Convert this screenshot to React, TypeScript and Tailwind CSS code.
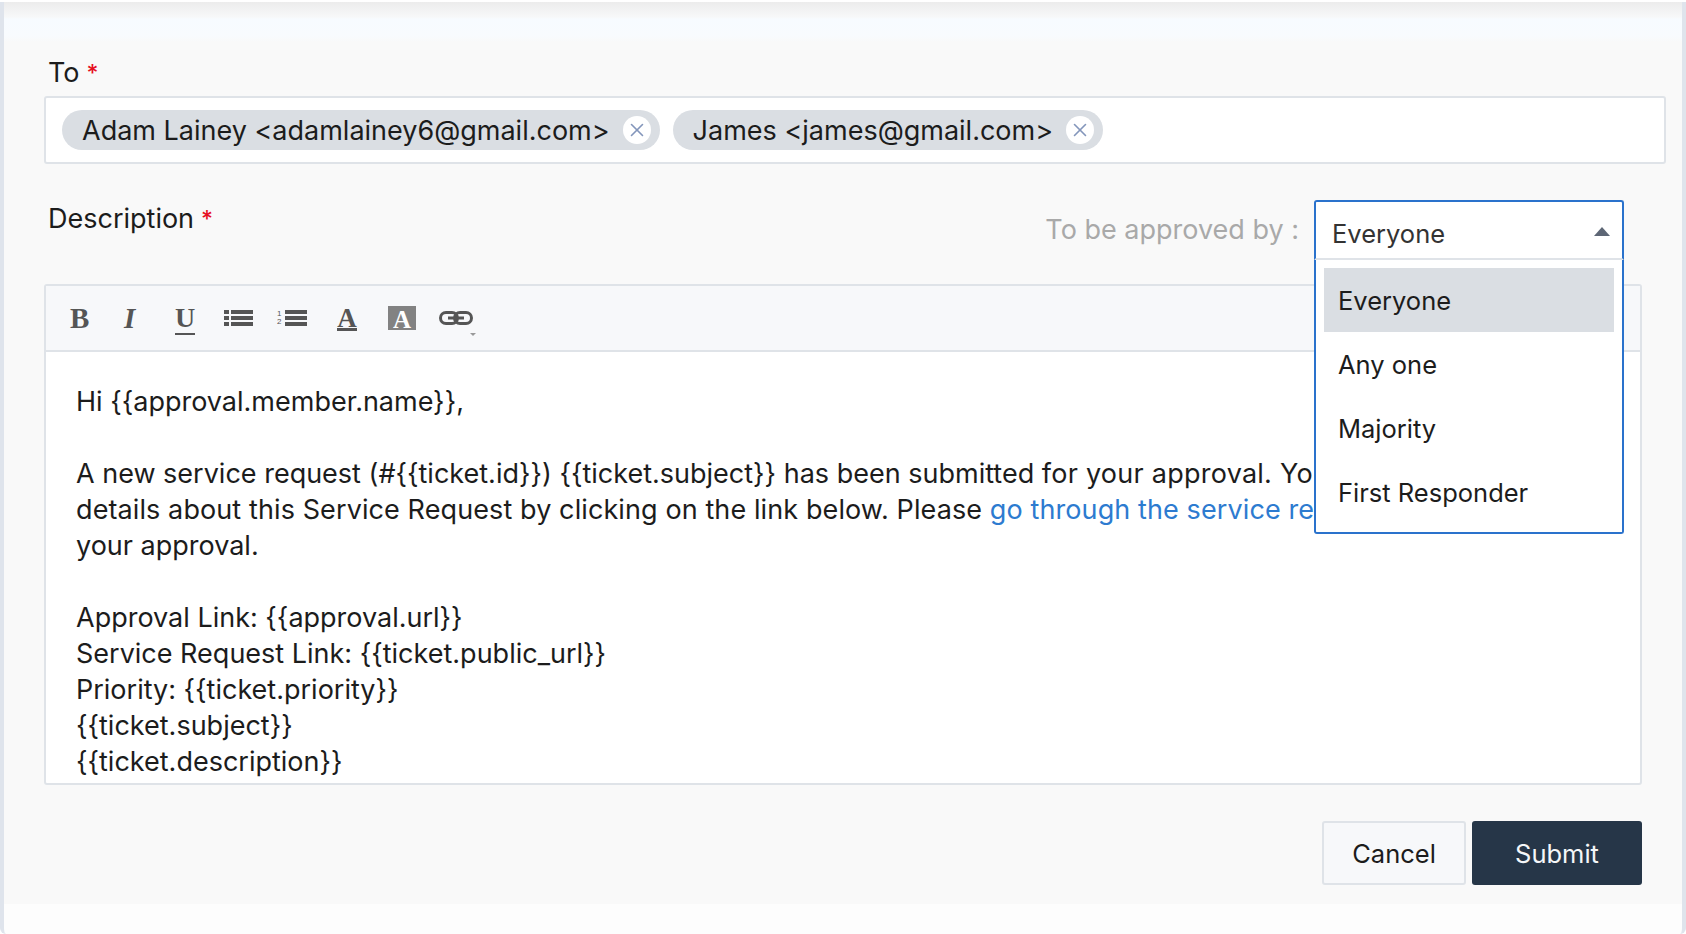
import { X } from "lucide-react";

const chips = ["Adam Lainey <adamlainey6@gmail.com>", "James <james@gmail.com>"];
const options = ["Everyone", "Any one", "Majority", "First Responder"];

function Required() {
  return <span className="ml-[7px] text-[23px] leading-none font-medium text-[#e60f1f]">*</span>;
}

function ListIcon({ numbered }: { numbered?: boolean }) {
  if (numbered) {
    return (
      <span className="flex h-[16px] w-[30px] items-center">
        <span className="flex w-[8px] flex-col text-[8px] leading-[8px] text-[#555] [font-family:'Liberation_Sans',sans-serif]">
          <span>1</span>
          <span>2</span>
        </span>
        <svg width="22" height="16" viewBox="0 0 22 16" className="fill-[#555]">
          <rect y="0" width="22" height="4" />
          <rect y="6" width="22" height="4" />
          <rect y="12" width="22" height="4" />
        </svg>
      </span>
    );
  }
  return (
    <svg width="29" height="16" viewBox="0 0 29 16" className="fill-[#555]">
      <rect y="0" width="5" height="4" />
      <rect y="6" width="5" height="4" />
      <rect y="12" width="5" height="4" />
      <rect x="7" y="0" width="22" height="4" />
      <rect x="7" y="6" width="22" height="4" />
      <rect x="7" y="12" width="22" height="4" />
    </svg>
  );
}

function Toolbar() {
  return (
    <div className="flex h-[66px] shrink-0 items-center border-b-2 border-[#dfe3e8] bg-[#f7f8fa] pl-[24px] text-[#555]">
      <span className="w-[54px] text-[29px] leading-none font-bold [font-family:'Liberation_Serif',serif]">B</span>
      <span className="w-[51px] text-[29px] leading-none font-bold italic [font-family:'Liberation_Serif',serif]">I</span>
      <span className="w-[49px] text-[28px] leading-none font-bold [font-family:'Liberation_Serif',serif]">
        <span className="border-b-2 border-[#555]">U</span>
      </span>
      <span className="w-[53px]">
        <ListIcon />
      </span>
      <span className="w-[60px]">
        <ListIcon numbered />
      </span>
      <span className="w-[51px] text-[27px] leading-none font-bold [font-family:'Liberation_Serif',serif]">
        <span className="inline-block h-[24px] w-[20px] border-b-[3px] border-[#555] text-center leading-[22px]">A</span>
      </span>
      <span className="mr-[23px] flex h-[24px] w-[28px] items-center justify-center bg-[#828282] pt-[3px] text-[25px] leading-none font-bold text-white [font-family:'Liberation_Serif',serif]">
        A
      </span>
      <span className="relative">
        <svg width="34" height="14" viewBox="0 0 34 14" fill="none" className="stroke-[#555]">
          <rect x="1.5" y="1.5" width="17" height="11" rx="5.5" strokeWidth="3" />
          <rect x="15.5" y="1.5" width="17" height="11" rx="5.5" strokeWidth="3" />
          <path d="M9 7h16" strokeWidth="3" />
        </svg>
        <span className="absolute top-[22px] left-[31px] h-0 w-0 border-x-[3px] border-t-[3px] border-x-transparent border-t-[#999]" />
      </span>
    </div>
  );
}

export default function App() {
  return (
    <div className="h-[934px] w-[1686px] overflow-hidden pt-[2px] text-[27px] text-[#1c1c1c] [font-family:Inter,sans-serif]">
      <div className="flex h-[932px] flex-col rounded-b-[6px] border-x-4 border-[#dfe4ec] bg-[#fdfdfd]">
        <div className="h-[902px] bg-[#f9f9f9] bg-[linear-gradient(#ececec,#f7f8f9_15px,#f7fbff_17px,#f8fbfe_34px,#f9f9f9_40px)] bg-[length:100%_40px] bg-no-repeat pt-[54px] pr-[16px] pl-[40px]">
          <div className="flex h-[34px] items-center pl-[4px]">
            To
            <Required />
          </div>

          <div className="mt-[6px] flex h-[68px] items-center gap-[13px] rounded-[3px] border-2 border-[#dfe3e8] bg-white pl-[16px]">
            {chips.map((chip) => (
              <span key={chip} className="flex h-[40px] items-center rounded-full bg-[#dadee3] pr-[9px] pl-[20px] whitespace-nowrap">
                <span className="pt-[2px]">{chip}</span>
                <span className="ml-[13px] flex h-[28px] w-[28px] items-center justify-center rounded-full bg-white">
                  <X size={22} strokeWidth={1.75} className="text-[#8396bb]" />
                </span>
              </span>
            ))}
          </div>

          <div className="relative z-10 mt-[36px] mr-[25px] flex h-[59px] justify-between pr-[17px]">
            <div className="flex h-[38px] items-center pl-[4px]">
              Description
              <Required />
            </div>
            <div className="flex">
              <span className="mt-[10px] mr-[15px] text-[#a9a9a9]">To be approved by :</span>
              <div className="relative h-[60px] w-[310px] text-[25.5px]">
                <div className="flex h-[60px] items-center justify-between rounded-t-[3px] border-2 border-[#2a72cc] border-b-[#dfe3e8] bg-white pt-[8px] pr-[12px] pl-[16px] text-[#333]">
                  Everyone
                  <span className="mb-[6px] h-0 w-0 border-x-[8px] border-b-[9px] border-x-transparent border-b-[#5d6675]" />
                </div>
                <div className="absolute top-full right-0 left-0 rounded-b-[3px] border-x-2 border-b-2 border-[#2a72cc] bg-white px-[8px] pt-[8px] pb-[8px]">
                  {options.map((option, i) => (
                    <div key={option} className={i === 0 ? "flex h-[64px] items-center bg-[#dadee3] px-[14px] pt-[2px]" : "flex h-[64px] items-center px-[14px] pt-[2px]"}>
                      {option}
                    </div>
                  ))}
                </div>
              </div>
            </div>
          </div>

          <div className="mt-[25px] mr-[24px] flex h-[501px] flex-col overflow-hidden rounded-[3px] border-2 border-[#dfe3e8] bg-white">
            <Toolbar />
            <div className="overflow-hidden px-[30px] pt-[32px] leading-[36px] whitespace-nowrap">
              <p>Hi {"{{approval.member.name}}"},</p>
              <p>&nbsp;</p>
              <p>
                A new service request (#{"{{ticket.id}}"}) {"{{ticket.subject}}"} has been submitted{" "}
                <span className="tracking-[0.25px]">for your approval. Yo</span>
              </p>
              <p className="tracking-[0.1px]">
                details about this Service Request by clicking on the link below. Please{" "}
                <span className="text-[#2d7bd0]">go through the service re</span>
              </p>
              <p>your approval.</p>
              <p>&nbsp;</p>
              <p>Approval Link: {"{{approval.url}}"}</p>
              <p>Service Request Link: {"{{ticket.public_url}}"}</p>
              <p>Priority: {"{{ticket.priority}}"}</p>
              <p>{"{{ticket.subject}}"}</p>
              <p>{"{{ticket.description}}"}</p>
            </div>
          </div>

          <div className="mt-[36px] mr-[24px] flex justify-end gap-[6px] text-[25.5px]">
            <button className="h-[64px] w-[144px] rounded-[3px] border-2 border-[#dfe3e8] bg-[#f7f8fa] pt-[2px]">Cancel</button>
            <button className="h-[64px] w-[170px] rounded-[3px] bg-[#263648] pt-[2px] text-[#f4f6f8]">Submit</button>
          </div>
        </div>
      </div>
    </div>
  );
}
